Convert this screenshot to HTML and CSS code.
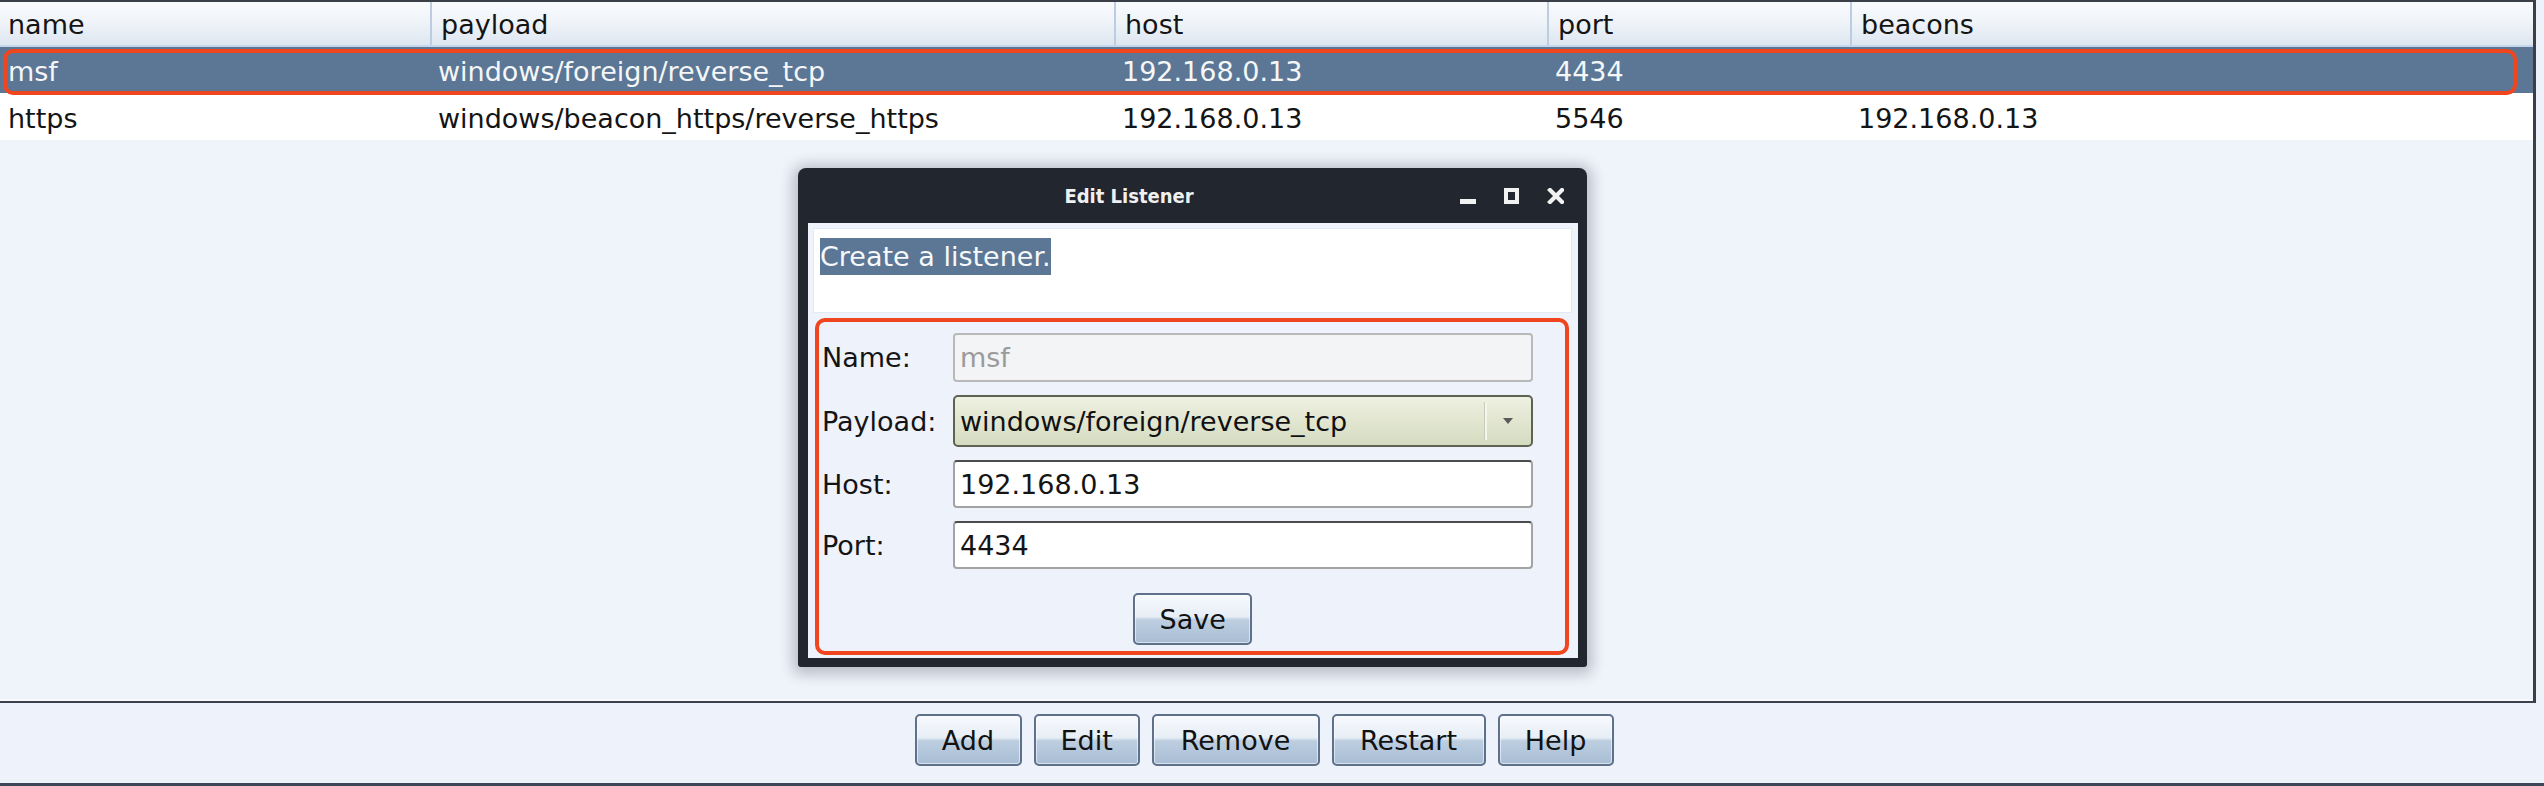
FILE: index.html
```html
<!DOCTYPE html>
<html>
<head>
<meta charset="utf-8">
<title>Listeners</title>
<link rel="stylesheet" href="styles.css">
</head>
<body>
<div class="app">
  <div class="table-pane">
    <div class="trow thead">
      <div class="cell">name</div>
      <div class="cell">payload</div>
      <div class="cell">host</div>
      <div class="cell">port</div>
      <div class="cell">beacons</div>
    </div>
    <div class="trow selected">
      <div class="cell">msf</div>
      <div class="cell">windows/foreign/reverse_tcp</div>
      <div class="cell">192.168.0.13</div>
      <div class="cell">4434</div>
      <div class="cell"></div>
    </div>
    <div class="trow">
      <div class="cell">https</div>
      <div class="cell">windows/beacon_https/reverse_https</div>
      <div class="cell">192.168.0.13</div>
      <div class="cell">5546</div>
      <div class="cell">192.168.0.13</div>
    </div>
  </div>
  <div class="button-bar">
    <button class="btn">Add</button>
    <button class="btn">Edit</button>
    <button class="btn">Remove</button>
    <button class="btn">Restart</button>
    <button class="btn">Help</button>
  </div>
  <div class="bottom-line"></div>

  <div class="row-mark"></div>

  <div class="dialog">
    <div class="titlebar">
      <div class="title">Edit Listener</div>
      <svg class="controls" width="104" height="16" viewBox="0 0 104 16">
        <rect x="0" y="11" width="16" height="5" fill="#f2f2f2"/>
        <rect x="46" y="2" width="11" height="12" fill="none" stroke="#f2f2f2" stroke-width="4"/>
        <path d="M90 2 L102 14 M102 2 L90 14" stroke="#f2f2f2" stroke-width="4.2" stroke-linecap="square"/>
      </svg>
    </div>
    <div class="dialog-body">
      <div class="desc"><span class="desc-sel">Create a listener.</span></div>
      <div class="form-box">
        <div class="form">
          <label class="lbl">Name:</label>
          <div class="field disabled">msf</div>
          <label class="lbl">Payload:</label>
          <div class="combo">
            <span class="combo-text">windows/foreign/reverse_tcp</span>
            <span class="combo-arrow"><svg width="12" height="8" viewBox="0 0 12 8"><path d="M1 1 L11 1 L6 7 Z" fill="#5a5a5a"/></svg></span>
          </div>
          <label class="lbl">Host:</label>
          <div class="field">192.168.0.13</div>
          <label class="lbl">Port:</label>
          <div class="field">4434</div>
        </div>
        <div class="save-row"><button class="btn">Save</button></div>
      </div>
    </div>
  </div>
</div>
</body>
</html>
```

FILE: styles.css
```css
* { box-sizing: border-box; }

html, body {
  margin: 0;
  padding: 0;
  background: #eef2fa;
}

body {
  font-family: "DejaVu Sans", "Liberation Sans", sans-serif;
  font-size: 27px;
  color: #141414;
}

.app {
  position: relative;
  width: 2544px;
  height: 786px;
  overflow: hidden;
  background: #eef2fa;
}

.table-pane {
  width: 2536px;
  height: 703px;
  border-top: 2px solid #3a3f48;
  border-right: 3px solid #3a3f48;
  border-bottom: 2px solid #3b4350;
  background: #eff3fa;
  box-shadow: inset 0 -2px 0 #f7f9fd;
}

.trow {
  display: grid;
  grid-template-columns: 430px 684px 433px 303px 1fr;
  height: 46px;
  align-items: center;
  background: #ffffff;
}

.trow .cell {
  padding-left: 8px;
  padding-top: 3px;
  white-space: nowrap;
  overflow: hidden;
  line-height: 43px;
  height: 46px;
}

.thead {
  height: 45px;
  background: linear-gradient(#f8fafd, #f0f4f9 45%, #dde6f1);
  border-bottom: 2px solid #c5d6eb;
}

.thead .cell {
  line-height: 40px;
  height: 43px;
}

.thead .cell + .cell {
  border-left: 2px solid #bccde1;
  padding-left: 9px;
}

.trow.selected {
  background: #5b7795;
  color: #f4f6f8;
}

.trow.selected + .trow {
  height: 47px;
}

.button-bar {
  width: 2536px;
  height: 80px;
  display: flex;
  justify-content: center;
  align-items: flex-start;
  gap: 12px;
  padding-top: 11px;
  padding-right: 8px;
}

.btn {
  height: 52px;
  padding: 0 25px;
  font-family: "DejaVu Sans", "Liberation Sans", sans-serif;
  font-size: 27px;
  color: #121212;
  border: 2px solid #5f708a;
  border-radius: 5px;
  background: linear-gradient(#f7f9fc 0%, #e7eef6 45%, #bdcee0 52%, #a8bdd4 100%);
  box-shadow: inset 0 0 0 1px rgba(255,255,255,0.55);
}

.button-bar .btn:nth-child(1) { width: 107px; }
.button-bar .btn:nth-child(2) { width: 106px; }
.button-bar .btn:nth-child(3) { width: 168px; }
.button-bar .btn:nth-child(4) { width: 154px; }
.button-bar .btn:nth-child(5) { width: 116px; }

.bottom-line {
  height: 3px;
  background: #3d4757;
}

/* red annotation around the selected row */
.row-mark {
  position: absolute;
  left: 3px;
  top: 49px;
  width: 2514px;
  height: 46px;
  border: 4px solid #f0461f;
  border-radius: 10px;
}

/* dialog */
.dialog {
  position: absolute;
  left: 798px;
  top: 168px;
  width: 789px;
  height: 499px;
  background: #22262f;
  border-radius: 8px 8px 3px 3px;
  box-shadow: 0 2px 14px 5px rgba(40, 50, 70, 0.28);
  display: flex;
  flex-direction: column;
}

.titlebar {
  height: 55px;
  display: flex;
  align-items: center;
}

.title {
  flex: 1;
  text-align: center;
  font-family: "DejaVu Sans Condensed", "DejaVu Sans", sans-serif;
  font-stretch: condensed;
  font-weight: bold;
  font-size: 20px;
  color: #f0f0f0;
}

.controls {
  margin-right: 23px;
  margin-top: 1px;
}

.dialog-body {
  margin: 0 9px 9px 10px;
  flex: 1;
  background: #eef2fa;
  padding: 5px 6px 3px 5px;
  display: flex;
  flex-direction: column;
}

.desc {
  height: 85px;
  background: #ffffff;
  border: 1px solid #e3e9f2;
  padding: 9px 6px 5px;
}

.desc-sel {
  display: inline-block;
  line-height: 37px;
  background: #5b7795;
  color: #f6f8fa;
}

.form-box {
  margin: 5px 3px 0 2px;
  flex: 1;
  border: 4px solid #f0461f;
  border-radius: 10px;
  padding: 11px 32px 4px 3px;
  display: flex;
  flex-direction: column;
}

.form {
  display: grid;
  grid-template-columns: 131px 1fr;
  grid-template-rows: 49px 52px 48px 48px;
  row-gap: 13px;
  align-items: center;
}

.lbl {
  white-space: nowrap;
}

.field {
  height: 100%;
  display: flex;
  align-items: center;
  padding-left: 5px;
  background: #ffffff;
  border: 2px solid #a3a3a3;
  border-top-color: #4c4c4c;
  border-radius: 4px;
  white-space: nowrap;
}

.field.disabled {
  background: #f3f4f6;
  border-color: #b9b9b9;
  color: #9a9a9a;
}

.combo {
  height: 100%;
  display: flex;
  align-items: center;
  border: 2px solid #5e6350;
  border-radius: 5px;
  background: linear-gradient(#eef0e2 0%, #e3e7d2 45%, #d5dbc0 100%);
  color: #111;
}

.combo-text {
  flex: 1;
  padding-left: 5px;
  white-space: nowrap;
}

.combo-arrow {
  width: 44px;
  height: 38px;
  margin-right: 2px;
  border-left: 2px solid #f4f5ec;
  box-shadow: -1px 0 0 #c9cdb7;
  display: flex;
  align-items: center;
  justify-content: center;
}

.save-row {
  margin-top: 24px;
  display: flex;
  justify-content: center;
  padding-left: 29px;
}

.save-row .btn {
  width: 119px;
}
```
